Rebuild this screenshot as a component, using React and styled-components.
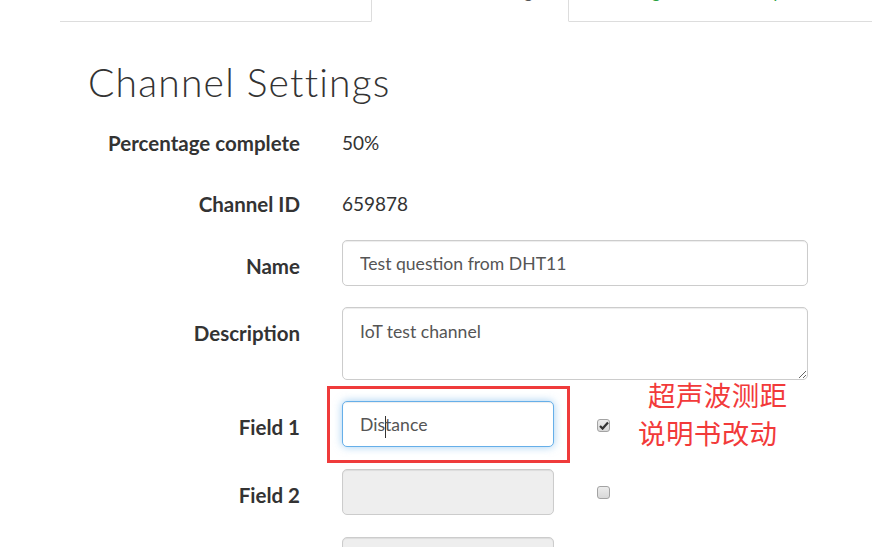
import styled, { createGlobalStyle } from "styled-components";

const GlobalStyle = createGlobalStyle`
  html, body {
    margin: 0;
    padding: 0;
    background: #fff;
    overflow: hidden;
  }
  body {
    font-family: "Noto Sans", "Liberation Sans", sans-serif;
    color: #333;
  }
`;

const Page = styled.div`
  width: 872px;
  height: 547px;
  position: relative;
  overflow: hidden;
`;

const Tabs = styled.ul`
  list-style: none;
  display: flex;
  margin: -20px 0 0 60px;
  padding: 0;
  height: 41px;
  border-bottom: 1px solid #ddd;
`;

const Tab = styled.li`
  box-sizing: border-box;
  flex-shrink: 0;
  height: 42px;
  width: ${(p) => p.$width}px;
  padding-left: ${(p) => p.$pad}px;
  font-family: "Lato", sans-serif;
  font-size: 17px;
  line-height: 24px;
  white-space: nowrap;
  color: ${(p) => (p.$active ? "#555" : "#2ba13f")};
  background: ${(p) => (p.$active ? "#fff" : "transparent")};
  border: 1px solid ${(p) => (p.$active ? "#ddd" : "transparent")};
  border-bottom-color: ${(p) => (p.$active ? "#fff" : "transparent")};
  border-top: none;
`;

const Content = styled.div`
  padding: 0 0 0 88px;
`;

const Title = styled.h1`
  margin: 39px 0 17px;
  font-family: "Lato", sans-serif;
  font-weight: 300;
  font-size: 39px;
  line-height: 42px;
  letter-spacing: 1.2px;
  color: #333;
`;

const Form = styled.div`
  display: flex;
  flex-direction: column;
`;

const Row = styled.div`
  display: grid;
  grid-template-columns: 212px 466px;
  column-gap: 42px;
  align-items: ${(p) => (p.$static ? "center" : "start")};
  min-height: 46px;
  margin-bottom: ${(p) => p.$gap}px;
`;

const FieldRow = styled.div`
  display: grid;
  grid-template-columns: 212px 212px 13px;
  column-gap: 42px;
  align-items: start;
  margin-bottom: 22px;
  > :nth-child(3) {
    margin-left: 1px;
  }
`;

const Label = styled.label`
  text-align: right;
  font-family: "Lato", sans-serif;
  font-weight: 700;
  font-size: 20.5px;
  line-height: 28px;
  color: #333;
  padding-top: ${(p) => (p.$static ? 0 : 12)}px;
`;

const Value = styled.span`
  font-family: "Lato", sans-serif;
  font-size: 19px;
  line-height: 28px;
  color: #333;
`;

const inputBase = `
  box-sizing: border-box;
  width: 100%;
  height: 46px;
  border: 1px solid #ccc;
  border-radius: 5px;
  padding: 0 17px;
  font-family: "Lato", sans-serif;
  font-size: 17.6px;
  color: #555;
  background: #fff;
  box-shadow: inset 0 1px 1px rgba(0, 0, 0, 0.075);
  outline: none;
`;

const Input = styled.input`
  ${inputBase}
  display: block;
  margin: 0;
  background: ${(p) => (p.disabled ? "#eee" : "#fff")};
`;

const TextArea = styled.textarea`
  ${inputBase}
  display: block;
  margin: 0;
  height: 73px;
  padding: 12px 17px 8px;
  line-height: 24px;
  resize: vertical;
`;

const FocusBox = styled.div`
  ${inputBase}
  display: flex;
  align-items: center;
  padding-top: 4px;
  border-color: #66afe9;
  box-shadow: inset 0 1px 1px rgba(0, 0, 0, 0.075),
    0 0 8px rgba(102, 175, 233, 0.6);
`;

const Caret = styled.span`
  display: inline-block;
  width: 1px;
  height: 22px;
  background: #333;
  vertical-align: middle;
  margin: 0 -1px 0 0;
`;

const CheckWrap = styled.span`
  box-sizing: border-box;
  display: flex;
  align-items: center;
  justify-content: center;
  width: 13px;
  height: 13px;
  margin-top: ${(p) => p.$top}px;
  border: 1px solid #a3a3a3;
  border-radius: 3px;
  background: linear-gradient(#ececec, #d8d8d8);
`;

const Annotation = styled.div`
  position: absolute;
  left: 327px;
  top: 386px;
  width: 243px;
  height: 77px;
  box-sizing: border-box;
  border: 3px solid #ef3b3b;
`;

const Note = styled.div`
  position: absolute;
  left: 638px;
  top: 375px;
  font-family: "Noto Sans CJK SC", sans-serif;
  font-size: 27.5px;
  line-height: 38px;
  color: #f23a3a;
  letter-spacing: 0.4px;
`;

const NoteLine = styled.div`
  padding-left: ${(p) => p.$indent || 0}px;
`;

function Checkbox({ checked, top }) {
  return (
    <CheckWrap $top={top}>
      {checked && (
        <svg width="10" height="9" viewBox="0 0 10 9">
          <path d="M1 5 L3.6 7.6 L9 1.5" fill="none" stroke="#333" strokeWidth="2.2" />
        </svg>
      )}
    </CheckWrap>
  );
}

export default function App() {
  return (
    <Page>
      <GlobalStyle />
      <Tabs>
        <Tab $width={156} $pad={20}>Private View</Tab>
        <Tab $width={155} $pad={20}>Public View</Tab>
        <Tab $active $width={198} $pad={43}>Channel Settings</Tab>
        <Tab $width={125} $pad={35}>Sharing</Tab>
        <Tab $width={140} $pad={27}>API Keys</Tab>
      </Tabs>
      <Content>
        <Title>Channel Settings</Title>
        <Form>
          <Row $static $gap={15}>
            <Label $static>Percentage complete</Label>
            <Value>50%</Value>
          </Row>
          <Row $static $gap={13}>
            <Label $static>Channel ID</Label>
            <Value>659878</Value>
          </Row>
          <Row $gap={21}>
            <Label>Name</Label>
            <Input readOnly value="Test question from DHT11" />
          </Row>
          <Row $gap={21}>
            <Label>Description</Label>
            <TextArea readOnly value="IoT test channel" />
          </Row>
          <FieldRow>
            <Label>Field 1</Label>
            <FocusBox>
              <span>
                Dis<Caret />tance
              </span>
            </FocusBox>
            <Checkbox checked top={18} />
          </FieldRow>
          <FieldRow>
            <Label>Field 2</Label>
            <Input disabled value="" />
            <Checkbox top={17} />
          </FieldRow>
          <FieldRow>
            <Label>Field 3</Label>
            <Input disabled value="" />
            <Checkbox top={17} />
          </FieldRow>
        </Form>
      </Content>
      <Annotation />
      <Note>
        <NoteLine $indent={10}>超声波测距</NoteLine>
        <NoteLine>说明书改动</NoteLine>
      </Note>
    </Page>
  );
}
